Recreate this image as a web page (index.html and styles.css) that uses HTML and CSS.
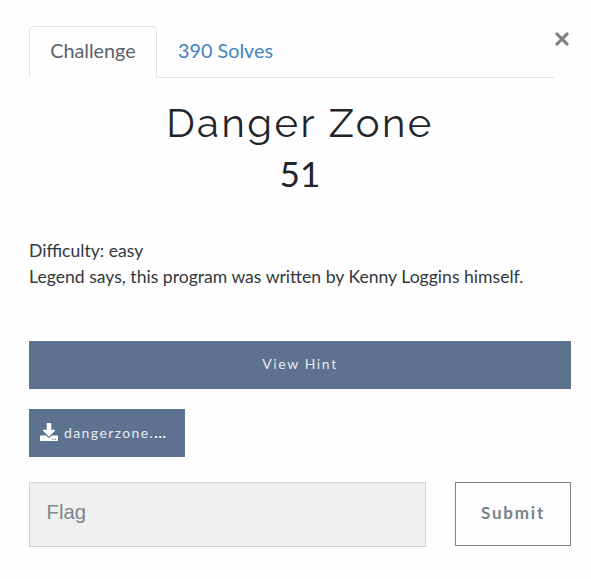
FILE: index.html
```html
<!DOCTYPE html>
<html lang="en">
<head>
    <meta charset="UTF-8">
    <meta name="viewport" content="width=device-width, initial-scale=1.0">
    <title>Danger Zone</title>
    <link rel="stylesheet" href="styles.css">
</head>
<body>
    <div class="modal-body">
        <div class="modal-top">
            <ul class="nav-tabs">
                <li><a class="nav-link active" href="#challenge">Challenge</a></li>
                <li><a class="nav-link" href="#solves">390 Solves</a></li>
            </ul>
            <button type="button" class="close" aria-label="Close">
                <svg viewBox="0 0 14 14" width="14" height="14">
                    <path d="M1.900 1.900L12.100 12.100M12.100 1.900L1.900 12.100" />
                </svg>
            </button>
        </div>

        <div id="challenge">
            <h2 class="challenge-name">Danger Zone</h2>
            <h3 class="challenge-value">51</h3>

            <p class="challenge-desc">Difficulty: easy<br>Legend says, this program was written by Kenny Loggins himself.</p>

            <button type="button" class="btn btn-hint">View Hint</button>

            <a class="btn btn-file" href="#file">
                <svg class="file-icon" viewBox="0 0 512 512" width="18" height="18">
                    <path d="M216 0h80c13.300 0 24 10.700 24 24v168h87.700c17.800 0 26.700 21.500 14.100 34.100L269.700 378.300c-7.500 7.500-19.800 7.500-27.300 0L90.100 226.100c-12.600-12.600-3.700-34.100 14.100-34.100H192V24c0-13.300 10.700-24 24-24zm296 376v112c0 13.300-10.700 24-24 24H24c-13.300 0-24-10.700-24-24V376c0-13.300 10.700-24 24-24h146.700l49 49c20.100 20.100 52.500 20.100 72.600 0l49-49H488c13.300 0 24 10.700 24 24zm-124 88c0-11-9-20-20-20s-20 9-20 20 9 20 20 20 20-9 20-20zm64 0c0-11-9-20-20-20s-20 9-20 20 9 20 20 20 20-9 20-20z" />
                </svg>
                <span class="file-name">dangerzone.<b>...</b></span>
            </a>

            <form class="submit-row">
                <input class="flag-input" type="text" placeholder="Flag">
                <button type="button" class="btn btn-submit">Submit</button>
            </form>
        </div>
    </div>
</body>
</html>
```
FILE: styles.css
```css
* {
    box-sizing: border-box;
}

body {
    margin: 0;
    font-family: "Lato", sans-serif;
    font-size: 19.8px;
    color: #212529;
    background-color: #fefefe;
}

.modal-body {
    padding: 26px 20px 0 29px;
}

.modal-top {
    display: flex;
    align-items: flex-start;
}

.nav-tabs {
    display: flex;
    width: 525px;
    height: 52px;
    margin: 0;
    padding: 0;
    list-style: none;
    border-bottom: 1px solid #dee2e6;
}

.nav-link {
    display: block;
    height: 52px;
    padding: 8px 20.2px;
    border: 1px solid transparent;
    border-radius: 5px 5px 0 0;
    line-height: 30px;
    color: #4183c4;
    text-decoration: none;
}

.nav-link.active {
    color: #5b6269;
    background-color: #fefefe;
    border-color: #dee2e6 #dee2e6 #fefefe;
}

.close {
    display: flex;
    margin: 6px 0 0 1px;
    padding: 0;
    border: none;
    background: none;
}

.close path {
    fill: none;
    stroke: #808080;
    stroke-width: 3;
    stroke-linecap: round;
}

/* Challenge text */
.challenge-name {
    margin: 18px 0 0;
    font-family: "Raleway", "Lato", sans-serif;
    font-size: 40px;
    font-weight: 400;
    letter-spacing: 2.5px;
    line-height: 54px;
    text-align: center;
}

.challenge-value {
    margin: 1px 0 0;
    font-size: 35.2px;
    font-weight: 400;
    line-height: 44px;
    text-align: center;
}

.challenge-desc {
    margin: 43px 0 0;
    font-size: 17.6px;
    line-height: 26.4px;
    color: #33383c;
}

/* Buttons */
.btn {
    display: flex;
    align-items: center;
    justify-content: center;
    font-family: "Lato", sans-serif;
    font-size: 14px;
    letter-spacing: 1.4px;
    text-decoration: none;
    color: #e6ebf1;
    background-color: #5d728f;
    border: none;
    border-radius: 0;
}

.btn-hint {
    width: 542px;
    height: 48px;
    margin-top: 50px;
    padding-bottom: 3px;
    letter-spacing: 1.6px;
}

.btn-file {
    justify-content: flex-start;
    width: 156px;
    height: 48px;
    margin-top: 20px;
    padding-left: 11px;
    gap: 6px;
}

.file-icon {
    margin-top: -2px;
    fill: #fff;
}

.file-name b {
    letter-spacing: 0.8px;
    color: #fff;
}

.submit-row {
    display: flex;
    width: 542px;
    margin-top: 25px;
    gap: 29px;
}

.flag-input {
    width: 397px;
    height: 65px;
    padding: 0 16.5px 4px;
    border: 1px solid #ced4da;
    background-color: #efefef;
    font-family: "Liberation Sans", Arial, sans-serif;
    font-size: 20.3px;
}

.flag-input::placeholder {
    color: #7c858d;
}

.btn-submit {
    flex: 1;
    height: 64px;
    padding: 0 0 2px;
    border: 1px solid #7b858f;
    background-color: transparent;
    color: #78828a;
    font-size: 17px;
    font-weight: 700;
    letter-spacing: 1.8px;
}
```
